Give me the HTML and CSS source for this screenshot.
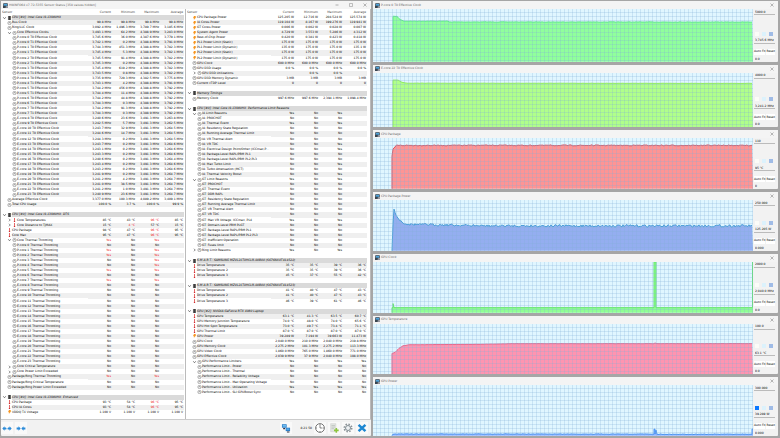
FILE: index.html
```html
<!DOCTYPE html>
<html lang="en">
<head>
    <meta charset="UTF-8">
    <meta name="viewport" content="width=device-width, initial-scale=1.0">
    <title>HWiNFO64 Sensor Status</title>
    <link rel="stylesheet" href="styles.css">
</head>
<body>
    <!-- Icon symbols -->
    <svg class="symbols" aria-hidden="true">
        <symbol id="i-clock" viewBox="0 0 16 16"><circle cx="8" cy="8" r="6.5" fill="#fff" stroke="#777" stroke-width="2.4"/><path d="M8 4v4l3 2" fill="none" stroke="#666" stroke-width="2"/></symbol>
        <symbol id="i-temp" viewBox="0 0 16 16"><path d="M6.5 0h3v10h-3z" fill="#d33"/><circle cx="8" cy="12.5" r="3" fill="#c11"/></symbol>
        <symbol id="i-power" viewBox="0 0 16 16"><path d="M6 0h8l-3 5h4L5 16l2-7H2z" fill="#f7941d"/></symbol>
        <symbol id="i-chip" viewBox="0 0 16 16"><path d="M3 0h10v16H3z" fill="#333"/><path d="M1 3h14M1 8h14M1 13h14" stroke="#777" stroke-width="1"/></symbol>
        <symbol id="i-open" viewBox="0 0 16 16"><path d="M3 5l5 6 5-6" fill="none" stroke="#333" stroke-width="2.5"/></symbol>
        <symbol id="i-closed" viewBox="0 0 16 16"><path d="M6 3l5 5-5 5" fill="none" stroke="#333" stroke-width="2.5"/></symbol>
        <symbol id="i-app" viewBox="0 0 16 16"><path d="M1 1h14v10H1z" fill="#1c2f40"/><path d="M3 3h10v6H3z" fill="#4fa3d8"/><path d="M0 9h9v7H0z" fill="#38444e"/><path d="M9 12h7v3H9z" fill="#667"/></symbol>
        <symbol id="i-x" viewBox="0 0 16 16"><path d="M2 2l12 12M14 2L2 14" fill="none" stroke="#777" stroke-width="2"/></symbol>
    </svg>

    <main class="desktop">
        <section class="window sensors">
            <header class="titlebar">
                <svg class="app-icon"><use href="#i-app"/></svg>
                <h1>HWiNFO64 v7.72-5355 Sensor Status [358 values hidden]</h1>
                <div class="window-buttons">
                    <button aria-label="Minimize"><svg viewBox="0 0 16 16"><path d="M2 8h12" stroke="#999" stroke-width="3"/></svg></button>
                    <button aria-label="Maximize"><svg viewBox="0 0 16 16"><path d="M2 2h12v12H2z" fill="none" stroke="#888" stroke-width="2"/></svg></button>
                    <button aria-label="Close"><svg><use href="#i-x"/></svg></button>
                </div>
            </header>
            <div class="panels">
                <div class="panel" id="panel-left"></div>
                <div class="panel" id="panel-right"></div>
            </div>
            <footer class="toolbar">
                <button aria-label="Expand columns"><svg class="wide" viewBox="0 0 30 16"><path d="M0 8l7-7v4h5v6H7v4zM30 8l-7-7v4h-5v6h5v4z" fill="#2a8ad8"/><path d="M12 6h6v4h-6z" fill="#8fc4ee"/></svg></button>
                <button aria-label="Shrink columns"><svg class="wide" viewBox="0 0 30 16"><path d="M14 8L7 1v4H1v6h6v4zM16 8l7-7v4h6v6h-6v4z" fill="#2a8ad8"/></svg></button>
                <span class="spacer"></span>
                <button aria-label="Remote monitoring"><svg viewBox="0 0 32 32"><path d="M3 4h15v11H3z" fill="#2679c4"/><path d="M5 6h11v6H5z" fill="#6fbdf0"/><path d="M15 15h14v11H15z" fill="#2679c4"/><path d="M17 17h10v6H17z" fill="#4ea6e6"/><path d="M7 16h6v4H7zM19 27h8v3h-8z" fill="#334"/></svg></button>
                <span class="elapsed">8:21:50</span>
                <button aria-label="Reset clock"><svg viewBox="0 0 32 32"><circle cx="16" cy="16" r="14" fill="#fff" stroke="#555" stroke-width="2.5"/><path d="M16 6v10h8M16 3v3M16 26v3M3 16h3M26 16h3" fill="none" stroke="#444" stroke-width="2"/></svg></button>
                <button aria-label="Start logging"><svg viewBox="0 0 32 32"><path d="M5 2h17v26H5z" fill="#e2e5e2" stroke="#bbb"/><path d="M8 8h11M8 13h11M8 18h8" stroke="#b4bab4" stroke-width="2"/><path d="M21 16h5v5h5v5h-5v5h-5v-5h-5v-5h5z" fill="#8dc63f"/></svg></button>
                <button aria-label="Settings"><svg viewBox="0 0 32 32"><circle cx="16" cy="16" r="12" fill="none" stroke="#8b9297" stroke-width="5" stroke-dasharray="5 4.4"/><circle cx="16" cy="16" r="8" fill="#eef1f3" stroke="#7b868c" stroke-width="3"/></svg></button>
                <button aria-label="Exit"><svg viewBox="0 0 32 32"><path d="M5 6l22 20M27 6L5 26" stroke="#1c86d1" stroke-width="8"/></svg></button>
            </footer>
        </section>

        <div class="graphs" id="graphs"></div>
    </main>

    <script src="script.js"></script>
</body>
</html>
```

FILE: styles.css
```css
* {
    box-sizing: border-box;
}

body {
    margin: 0;
    height: 100vh;
    background-color: #a6a6a6;
    color: #000;
    font-family: 'DejaVu Sans', sans-serif;
    font-size: 3px;
    line-height: 5px;
}

h1, h2 {
    margin: 0;
    font-size: 3px;
    font-weight: normal;
    color: #666;
    white-space: nowrap;
}

svg {
    display: block;
}

button {
    border: none;
    padding: 0;
    background: none;
    color: inherit;
    font: inherit;
}

.symbols {
    position: absolute;
    width: 0;
    height: 0;
}

.desktop {
    display: grid;
    grid-template-columns: 370fr 405fr;
    gap: 2px;
    height: 100%;
    padding: 1px 2px 2px 1px;
}

.window {
    display: flex;
    flex-direction: column;
    min-width: 0;
    min-height: 0;
    background-color: #f2f2f2;
    border-radius: 1px;
}

/* Title bars */
.titlebar {
    display: flex;
    align-items: center;
    gap: 1px;
    height: 8px;
    flex: none;
    padding: 0 4px 0 2px;
    background-color: #f4f4f4;
}

.app-icon {
    width: 5px;
    height: 5px;
}

.window-buttons {
    display: flex;
    gap: 10px;
    margin-left: auto;
}

.window-buttons svg {
    width: 4px;
    height: 4px;
}

/* Sensor lists */
.panels {
    display: grid;
    grid-template-columns: 1fr 1fr;
    flex: 1;
    min-height: 0;
}

.panel {
    padding: 1px 1px 4px 1px;
    background-color: #fff;
    border-right: 1px solid #bbb;
}

.panel + .panel {
    padding-right: 3px;
}

table {
    width: 100%;
    height: 100%;
    border-collapse: collapse;
    table-layout: fixed;
}

col.value {
    width: 24px;
}

th, td {
    height: 5px;
    padding: 0;
    text-align: right;
    font-weight: normal;
    white-space: nowrap;
    overflow: hidden;
}

thead th {
    color: #444;
}

td, thead th {
    padding-right: 1px;
}

th:first-child {
    padding-right: 0;
    text-align: left;
}

.name {
    display: flex;
    align-items: center;
    height: 100%;
}

.name svg {
    width: 5px;
    height: 4px;
    flex: none;
}

.name .label {
    flex: 1;
    min-width: 0;
}

.depth-1 {
    padding-left: 5px;
}

tr.shaded td,
tr.shaded .label {
    background-color: #efefef;
}

tr.group .label {
    background-color: #dadada;
    font-style: italic;
}

td.alert {
    color: #f01020;
}

/* Bottom toolbar */
.toolbar {
    display: flex;
    align-items: center;
    gap: 2px;
    height: 17px;
    flex: none;
    padding: 0 3px 0 0;
    border-top: 1px solid #ccc;
}

.toolbar button {
    display: flex;
    align-items: center;
    justify-content: center;
    width: 12px;
    height: 12px;
    background-color: #f9f9f9;
}

.toolbar svg {
    width: 10px;
    height: 10px;
}

.toolbar svg.wide {
    width: 10px;
    height: 5px;
}

.spacer {
    flex: 1;
}

.elapsed {
    width: 18px;
    text-align: right;
}

/* Graph windows */
.graphs {
    display: grid;
    grid-template-rows: 61fr 63fr repeat(5, 59fr);
    gap: 3px;
    min-height: 0;
}

.graph-body {
    display: grid;
    grid-template-columns: 1fr 25px;
    flex: 1;
    min-height: 0;
}

.plot {
    position: relative;
    min-height: 0;
    background-color: #e0f6ff;
}

.plot svg {
    width: 100%;
    height: 100%;
}

/* Grid lines over the graph */
.plot::after {
    content: "";
    position: absolute;
    inset: 0;
    background-image:
        repeating-linear-gradient(to right, transparent 0 3px, rgba(130, 175, 215, 0.26) 3px 4px),
        repeating-linear-gradient(to bottom, transparent 0 3px, rgba(130, 175, 215, 0.26) 3px 4px);
}

.side {
    display: flex;
    flex-direction: column;
    padding: 0 3px 0 1px;
    min-height: 0;
}

.side input {
    width: 100%;
    height: 6px;
    padding: 0 1px;
    border: none;
    border-bottom: 1px solid #bbb;
    background: none;
    color: inherit;
    font: inherit;
}

.side .min {
    height: 5px;
    border-bottom: none;
}

.swatches {
    display: flex;
    gap: 3px;
    margin-top: auto;
    padding: 0 1px 2px;
}

.swatches button {
    width: 4px;
    height: 4px;
}

.swatches .swatch-graph { background-color: #fcfcf8; }
.swatches .swatch-back { background-color: #dcf2fc; }
.swatches .swatch-grid { background-color: #9fbbe6; }
.swatches .swatch-solid { background-color: #0a78ff; }

.side-buttons {
    display: flex;
    gap: 1px;
    margin: 5px 0 2px;
}

.side-buttons button {
    flex: 1;
    height: 6px;
    background-color: #fff;
    white-space: nowrap;
}
```

FILE: script.js
```javascript
// Row format: [depth, twisty, icon, label, current, minimum, maximum, average]
// A row with one string is a group heading, null is an empty row
const mhz = (...v) => v.map(n => n + ' MHz');
const left = [['CPU [#0]: Intel Core i9-13980HX']];

left.push([0, '', 'clock', 'Bus Clock', ...mhz('99.8', '99.8', '99.8', '99.8')]);
left.push([0, '', 'clock', 'Ring/LLC Clock', ...mhz('3,092.4', '1,496.3', '3,789.7', '3,185.6')]);
left.push([1, 'open', 'clock', 'Core Effective Clocks', ...mhz('3,493.1', '64.2', '4,388.9', '3,283.0')]);

const pClocks = [
    ['3,745.6', '36.0', '4,387.6', '3,779.1'], ['3,742.1', '0.2', '4,388.8', '3,791.0'],
    ['3,744.3', '451.3', '4,388.8', '3,782.3'], ['3,745.4', '5.3', '4,388.8', '3,782.1'],
    ['3,745.5', '91.4', '4,388.8', '3,782.2'], ['3,745.3', '0.2', '4,388.8', '3,782.2'],
    ['3,745.4', '619.2', '4,388.8', '3,782.3'], ['3,743.5', '0.8', '4,388.8', '3,782.2'],
    ['3,735.9', '729.3', '4,382.5', '3,775.8'], ['3,743.1', '4.2', '4,388.8', '3,791.0'],
    ['3,744.2', '456.0', '4,388.8', '3,792.2'], ['3,744.4', '11.4', '4,388.8', '3,792.2'],
    ['3,744.2', '44.8', '4,388.8', '3,792.2'], ['3,744.3', '0.3', '4,388.9', '3,792.2'],
    ['3,744.2', '91.3', '4,388.8', '3,792.2'], ['3,744.3', '0.3', '4,388.9', '3,792.2']
];
pClocks.forEach((v, i) => left.push([1, '', 'clock', `P-core ${i >> 1} T${i & 1} Effective Clock`, ...mhz(...v)]));

const eClocks = [
    ['3,240.6', '23.6', '3,263.8'], ['3,242.5', '5.7', '3,262.5'], ['3,243.7', '32.9', '3,264.5'],
    ['3,244.6', '14.7', '3,264.5'], ['3,244.3', '0.2', '3,264.5'], ['3,243.7', '0.2', '3,264.6'],
    ['3,243.1', '0.2', '3,264.6'], ['3,243.3', '0.2', '3,264.6'], ['3,240.6', '0.2', '3,264.4'],
    ['3,243.4', '0.2', '3,264.6'], ['3,243.2', '0.2', '3,264.6'], ['3,241.9', '0.2', '3,264.7'],
    ['3,241.2', '4.2', '3,264.7'], ['3,241.0', '38.5', '3,264.7'], ['3,241.2', '1.0', '3,264.7'],
    ['3,240.9', '23.6', '3,264.7']
];
eClocks.forEach(([c, m, a], i) => left.push([1, '', 'clock', `E-core ${i + 8} T0 Effective Clock`, ...mhz(c, m, '3,491.3', a)]));

left.push([0, '', 'clock', 'Average Effective Clock', ...mhz('3,377.0', '100.3', '4,089.2', '3,409.1')]);
left.push([0, '', 'clock', 'Total CPU Usage', '100.0 %', '3.7 %', '100.0 %', '99.9 %']);
left.push(null);
left.push(['CPU [#0]: Intel Core i9-13980HX: DTS']);
left.push([1, 'closed', 'temp', 'Core Temperatures', '85 °C', '43 °C', '!96 °C', '85 °C']);
left.push([1, 'closed', 'temp', 'Core Distance to TjMAX', '15 °C', '!4 °C', '57 °C', '15 °C']);
left.push([0, '', 'temp', 'CPU Package', '94 °C', '47 °C', '!96 °C', '95 °C']);
left.push([0, '', 'temp', 'Core Max', '95 °C', '47 °C', '!96 °C', '95 °C']);

const yesNo = v => v.split('').map(c => c === 'Y' ? 'Yes' : c === '!' ? '!Yes' : c === 'N' ? 'No' : '');
left.push([1, 'open', 'clock', 'Core Thermal Throttling', ...yesNo('!N! ')]);
['NNN ', '!N! ', '!N! ', 'NN! ', 'NN! ', '!N! ', 'NNN ', '!N! '].forEach((v, i) => {
    left.push([1, '', 'clock', `P-core ${i} Thermal Throttling`, ...yesNo(v)]);
});
for (let i = 8; i < 24; i++) {
    left.push([1, '', 'clock', `E-core ${i} Thermal Throttling`, ...yesNo('NNN ')]);
}
left.push([1, 'closed', 'clock', 'Core Critical Temperature', ...yesNo('NNN ')]);
left.push([1, 'closed', 'clock', 'Core Power Limit Exceeded', ...yesNo('NNN ')]);
left.push([0, '', 'clock', 'Package/Ring Thermal Throttling', ...yesNo('!N! ')]);
left.push([0, '', 'clock', 'Package/Ring Critical Temperature', ...yesNo('NNN ')]);
left.push([0, '', 'clock', 'Package/Ring Power Limit Exceeded', ...yesNo('NNN ')]);
left.push(null);
left.push(['CPU [#0]: Intel Core i9-13980HX: Enhanced']);
left.push([0, '', 'temp', 'CPU Package', '93 °C', '54 °C', '!96 °C', '95 °C']);
left.push([0, '', 'temp', 'CPU IA Cores', '93 °C', '54 °C', '!96 °C', '95 °C']);
left.push([0, '', 'power', 'VDDQ TX Voltage', '1.100 V', '1.100 V', '1.100 V', '1.100 V']);

const right = [
    [0, '', 'power', 'CPU Package Power', '125.205 W', '12.716 W', '204.524 W', '125.574 W'],
    [0, '', 'power', 'IA Cores Power', '119.104 W', '8.167 W', '199.276 W', '119.941 W'],
    [0, '', 'power', 'GT Cores Power', '0.006 W', '0.002 W', '0.028 W', '0.007 W'],
    [0, '', 'power', 'System Agent Power', '4.729 W', '3.553 W', '5.286 W', '4.312 W'],
    [0, '', 'power', 'Rest-of-Chip Power', '0.420 W', '0.381 W', '0.423 W', '0.418 W'],
    [0, '', 'power', 'PL1 Power Limit (Static)', '175.0 W', '175.0 W', '175.0 W', '175.0 W'],
    [0, '', 'power', 'PL1 Power Limit (Dynamic)', '135.0 W', '175.0 W', '175.0 W', '135.1 W'],
    [0, '', 'power', 'PL2 Power Limit (Static)', '175.0 W', '175.0 W', '175.0 W', '175.0 W'],
    [0, '', 'power', 'PL2 Power Limit (Dynamic)', '175.0 W', '175.0 W', '175.0 W', '175.0 W'],
    [0, '', 'clock', 'GPU Clock', ...mhz('600.0', '600.0', '600.0', '600.0')],
    [0, '', 'clock', 'GPU D3D Usage', '0.0 %', '0.0 %', '0.0 %', '0.0 %'],
    [1, 'closed', 'clock', 'GPU D3D Utilizations', '', '0.0 %', '0.0 %', ''],
    [0, '', 'clock', 'GPU D3D Memory Dynamic', '3 MB', '3 MB', '3 MB', '3 MB'],
    [0, '', 'clock', 'Current cTDP Level', '0', '0', '0', '0'],
    null,
    ['Memory Timings'],
    [0, '', 'clock', 'Memory Clock', ...mhz('997.6', '997.6', '2,394.1', '1,098.4')],
    null,
    ['CPU [#0]: Intel Core i9-13980HX: Performance Limit Reasons']
];
[
    ['IA Limit Reasons', 'YNY'], ['IA: PROCHOT', 'NNN'], ['IA: Thermal Event', 'YNY'],
    ['IA: Residency State Regulation', 'NNN'], ['IA: Running Average Thermal Limit', 'NNN'],
    ['IA: VR Thermal Alert', 'NNN'], ['IA: VR TDC', 'NNY'],
    ['IA: Electrical Design Point/Other (ICCmax,P...', 'NNY'],
    ['IA: Package-Level RAPL/PBM PL1', 'NNN'], ['IA: Package-Level RAPL/PBM PL2,PL3', 'NNN'],
    ['IA: Max Turbo Limit', 'NNY'], ['IA: Turbo Attenuation (MCT)', 'NNN'],
    ['IA: Thermal Velocity Boost', 'NNY'], ['GT Limit Reasons', 'YNY'],
    ['GT: PROCHOT', 'NNN'], ['GT: Thermal Event', 'NNN'], ['GT: DDR RAPL', 'NNN'],
    ['GT: Residency State Regulation', 'NNN'], ['GT: Running Average Thermal Limit', 'NNN'],
    ['GT: VR Thermal Alert', 'NNN'], ['GT: VR TDC', 'NNN'],
    ['GT: Max VR Voltage, ICCmax, PL4', 'YNY'], ['GT: Domain-Level PBM PLGT', 'NNN'],
    ['GT: Package-Level RAPL/PBM PL1', 'NNN'], ['GT: Package-Level RAPL/PBM PL2,PL3', 'NNN'],
    ['GT: Inefficient Operation', 'NNN'], ['GT: Fuses limit', 'NNN'], ['Ring Limit Reasons', 'YNY']
].forEach(([label, v]) => {
    const twisty = label.startsWith('Ring') ? 'closed' : label.includes(':') ? '' : 'open';
    right.push([1, twisty, 'clock', label, ...yesNo(v + ' ')]);
});
const drives = [
    [['35', '35', '39', '36'], ['35', '35', '39', '36'], ['45', '37', '55', '42']],
    [['41', '40', '47', '43'], ['41', '40', '47', '43'], ['46', '39', '61', '46']]
];
drives.forEach((rows, n) => {
    right.push(null, [`S.M.A.R.T.: SAMSUNG MZVL21T0HCLR-00B00 (S676NX0T4145${22 + n})`]);
    rows.forEach((v, i) => right.push([0, '', 'temp', 'Drive Temperature' + (i ? ' ' + (i + 1) : ''), ...v.map(t => t + ' °C')]));
});
right.push(
    null,
    ['GPU [#2]: NVIDIA GeForce RTX 4080 Laptop'],
    [0, '', 'temp', 'GPU Temperature', '63.1 °C', '41.3 °C', '63.5 °C', '60.7 °C'],
    [0, '', 'temp', 'GPU Memory Junction Temperature', '74.0 °C', '48.0 °C', '74.0 °C', '65.6 °C'],
    [0, '', 'temp', 'GPU Hot Spot Temperature', '73.0 °C', '49.7 °C', '73.4 °C', '71.1 °C'],
    [0, '', 'temp', 'GPU Thermal Limit', '87.0 °C', '87.0 °C', '87.0 °C', '87.0 °C'],
    [0, '', 'power', 'GPU Power', '39.289 W', '7.194 W', '39.663 W', '11.473 W'],
    [0, '', 'clock', 'GPU Clock', ...mhz('2,040.0', '210.0', '2,040.0', '219.8')],
    [0, '', 'clock', 'GPU Memory Clock', ...mhz('2,275.2', '101.3', '2,275.2', '113.3')],
    [0, '', 'clock', 'GPU Video Clock', ...mhz('1,860.0', '765.0', '1,860.0', '771.0')],
    [0, '', 'clock', 'GPU Effective Clock', ...mhz('2,039.9', '37.9', '2,040.0', '108.0')],
    [1, 'open', 'clock', 'GPU Performance Limiters', ...yesNo('YNYY')]
);
['Power', 'Thermal', 'Reliability Voltage', 'Max Operating Voltage', 'Utilization', 'SLI GPUBoost Sync'].forEach(label => {
    right.push([1, '', 'clock', 'Performance Limit - ' + label, ...yesNo(label === 'Utilization' ? 'YYYY' : 'NNNN')]);
});
right.push(null, null, null, null);

const use = (icon, cls = '') => `<svg class="${cls}"><use href="#i-${icon}"/></svg>`;

function rowHtml(row, i) {
    if (!row) {
        return '<tr><td colspan="5">&nbsp;</td></tr>';
    }
    if (row.length === 1) {
        return `<tr class="group"><th colspan="5" scope="rowgroup"><div class="name">${use('open', 'twisty')}${use('chip')}<span class="label">${row[0]}</span></div></th></tr>`;
    }
    const [depth, twisty, icon, label, ...values] = row;
    const cells = values.map(v => v[0] === '!' ? `<td class="alert">${v.slice(1)}</td>` : `<td>${v}</td>`).join('');
    const arrow = twisty ? use(twisty, 'twisty') : '<svg class="twisty"></svg>';
    return `<tr class="${i % 2 ? 'shaded' : ''}"><th scope="row"><div class="name depth-${depth}">${arrow}${use(icon)}<span class="label">${label}</span></div></th>${cells}</tr>`;
}

function renderTable(id, rows) {
    document.getElementById(id).innerHTML = `<table>
        <colgroup><col><col class="value"><col class="value"><col class="value"><col class="value"></colgroup>
        <thead><tr><th>Sensor</th><th>Current</th><th>Minimum</th><th>Maximum</th><th>Average</th></tr></thead>
        <tbody>${rows.map(rowHtml).join('')}</tbody></table>`;
}

renderTable('panel-left', left);
renderTable('panel-right', right);

// Graphs: points are [x, y from the top] on a 380 x 50 plot
const graphs = [
    { title: 'P-core 0 T0 Effective Clock', max: '5000.0', value: '3,745.6 MHz', min: '0.0', fill: '#90ff9c', line: '#5fe98a', noise: 0.2,
      points: [[20, 50], [20, 7], [24, 7], [27, 10], [31, 11.5], [75, 11.5], [76, 12.3], [379, 12.4]] },
    { title: 'E-core 22 T0 Effective Clock', max: '4000.0', value: '3,241.2 MHz', min: '0.0', fill: '#b0ff8a', line: '#93ee5e', noise: 0.1,
      points: [[20, 50], [20, 6.5], [25, 6.5], [29, 8.5], [34, 9.3], [379, 9.5]] },
    { title: 'CPU Package', max: '110', value: '95 °C', min: '0', fill: '#ff9494', line: '#dd5560', noise: 0.5,
      points: [[19, 50], [19, 18], [20, 11], [22, 9], [23, 7.3], [379, 7.3]] },
    { title: 'CPU Package Power', max: '250.000', value: '125.205 W', min: '0.000', fill: '#94aef0', line: '#4a9fd8', noise: 1.2,
      points: [[19, 50], [20, 24], [21, 9], [23, 15], [26, 19], [30, 22.5], [36, 24], [70, 24.5], [110, 25.5], [379, 25.5]] },
    { title: 'GPU Clock', max: '2000.0', value: '2,040.0 MHz', min: '0.0', fill: '#90ff94', line: '#66e66c', noise: 0,
      points: [[19, 50], [19, 45], [20, 45], [20, 41], [21, 45], [281, 45], [281, 0], [283, 0], [283, 45], [379.5, 45], [379.5, 0], [380, 0]] },
    { title: 'GPU Temperature', max: '100.0', value: '63.1 °C', min: '0.0', fill: '#ff94b0', line: '#e8688c', noise: 0.1,
      points: [[19, 50], [19, 29], [22, 28], [26, 24], [30, 21.5], [36, 20.5], [110, 20], [140, 19.4], [281, 19.4], [282, 18.7], [284, 19.4], [379, 19.3]] },
    { title: 'GPU Power', max: '300.000', value: '39.289 W', min: '0.000', fill: '#94b4ff', line: '#4a94f4', noise: 0.3, solid: true,
      points: [[19, 50], [20, 48.4], [281, 48.4], [281, 43.5], [282, 43.5], [282, 48.4], [283, 44.5], [284, 48.6], [379, 48.6], [379, 43.5], [380, 43.5]] }
];

let seed = 7;
function rand() {
    seed = (seed * 16807) % 2147483647;
    return seed / 2147483647;
}

// Fills the gaps between the key points with one sample per unit
function samples(points, noise) {
    const out = [];
    points.forEach(([x, y], i) => {
        out.push(`${x},${y}`);
        const next = points[i + 1];
        if (!next || next[0] - x < 2) return;
        for (let sx = x + 1; sx < next[0]; sx++) {
            const base = y + (next[1] - y) * (sx - x) / (next[0] - x);
            out.push(`${sx},${(base + (rand() - 0.5) * 2 * noise).toFixed(2)}`);
        }
    });
    return out.join(' ');
}

document.getElementById('graphs').innerHTML = graphs.map(g => {
    const line = samples(g.points, g.noise);
    return `<section class="window">
        <header class="titlebar">
            <svg class="app-icon"><use href="#i-app"/></svg>
            <h2>${g.title}</h2>
            <div class="window-buttons"><button aria-label="Close"><svg><use href="#i-x"/></svg></button></div>
        </header>
        <div class="graph-body">
            <div class="plot"><svg viewBox="0 0 380 50" preserveAspectRatio="none">
                <polygon points="${line} 380,50" fill="${g.fill}"/>
                <polyline points="${line}" fill="none" stroke="${g.line}" vector-effect="non-scaling-stroke"/>
            </svg></div>
            <div class="side">
                <input class="max" value="${g.max}" aria-label="${g.title} maximum">
                <div class="swatches">
                    <button class="${g.solid ? 'swatch-solid' : 'swatch-graph'}" aria-label="Graph color"></button>
                    <button class="swatch-back" aria-label="Background color"></button>
                    <button class="swatch-grid" aria-label="Grid color"></button>
                </div>
                <input value="${g.value}" aria-label="${g.title} value" readonly>
                <div class="side-buttons"><button>Auto Fit</button><button>Reset</button></div>
                <input class="min" value="${g.min}" aria-label="${g.title} minimum">
            </div>
        </div>
    </section>`;
}).join('');
```
